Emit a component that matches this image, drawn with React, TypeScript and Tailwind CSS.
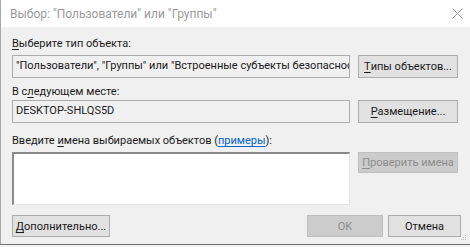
import React from "react";

const font = { fontFamily: 'Roboto, "Noto Sans", sans-serif' };

function U({ children }: { children: React.ReactNode }) {
  return <span className="underline underline-offset-[2px] decoration-[1px]">{children}</span>;
}

function Btn({
  children,
  w,
  h = 23,
  disabled,
}: {
  children: React.ReactNode;
  w: string;
  h?: number;
  disabled?: boolean;
}) {
  return (
    <div
      className={
        (disabled
          ? "bg-[#cccccc] border-[#bfbfbf] text-[#8c8c8c] "
          : "bg-[#e1e1e1] border-[#adadad] text-[#1a1a1a] ") +
        w +
        " shrink-0 border flex items-center justify-center text-[11px] leading-none whitespace-nowrap"
      }
      style={{ height: h }}
    >
      {children}
    </div>
  );
}

export default function App() {
  return (
    <div className="w-[470px] h-[247px] overflow-hidden bg-[#f0f0f0] flex flex-col" style={font}>
      <div className="flex-1 flex flex-col border-l border-[#a9a9a9] relative">
        <div className="h-[27px] bg-white flex items-center pl-[9px] text-[12px] text-[#9a9a9a] whitespace-nowrap">
          <span>Выбор: "Пользователи" или "Группы"</span>
          <svg className="ml-auto mr-[7px]" width="11" height="11" viewBox="0 0 11 11">
            <path d="M0.5 0.5 L10.5 10.5 M10.5 0.5 L0.5 10.5" stroke="#9a9a9a" strokeWidth="1" fill="none" />
          </svg>
        </div>
        <div className="flex flex-col pl-[11px] text-[11px] text-[#1a1a1a] whitespace-nowrap">
          <div className="h-[16px] mt-[9px] leading-[16px]">
            <U>В</U>ыберите тип объекта:
          </div>
          <div className="flex mt-[3px]">
            <div className="w-[338px] h-[23px] border border-[#adadad] bg-[#f0f0f0] flex items-center pl-[3px] overflow-hidden whitespace-nowrap">
              "Пользователи", "Группы" или "Встроенные субъекты безопасности"
            </div>
            <div className="ml-[8px]">
              <Btn w="w-[100px]">
                <U>Т</U>ипы объектов...
              </Btn>
            </div>
          </div>
          <div className="h-[16px] mt-[6px] leading-[16px]">
            В с<U>л</U>едующем месте:
          </div>
          <div className="flex">
            <div className="w-[338px] h-[23px] border border-[#adadad] bg-[#f0f0f0] flex items-center pl-[3px] overflow-hidden whitespace-nowrap">
              DESKTOP-SHLQS5D
            </div>
            <div className="ml-[8px]">
              <Btn w="w-[100px]">
                <U>Р</U>азмещение...
              </Btn>
            </div>
          </div>
          <div className="h-[16px] mt-[10px] leading-[16px]">
            Введите <U>и</U>мена выбираемых объектов (
            <span className="text-[#0066cc] underline underline-offset-[2px] decoration-[1px]">примеры</span>):
          </div>
          <div className="flex mt-[3px]">
            <div className="w-[338px] h-[53px] bg-white border-t-2 border-l-2 border-t-[#8a8a8a] border-l-[#8a8a8a] border-b border-r border-b-[#e3e3e3] border-r-[#e3e3e3]" />
            <div className="ml-[8px]">
              <Btn w="w-[100px]" h={21} disabled>
                <U>П</U>роверить имена
              </Btn>
            </div>
          </div>
          <div className="flex mt-[10px] items-start">
            <Btn w="w-[98px]" h={22}>
              <U>Д</U>ополнительно...
            </Btn>
            <div className="ml-auto mr-[9px] flex gap-[5px]">
              <Btn w="w-[76px]" h={22} disabled>
                OK
              </Btn>
              <Btn w="w-[73px]" h={22}>
                Отмена
              </Btn>
            </div>
          </div>
        </div>
        <svg className="absolute right-[3px] bottom-[3px]" width="6" height="6" viewBox="0 0 6 6">
          <rect x="4" y="0" width="1" height="1" fill="#b8b8b8" />
          <rect x="2" y="2" width="1" height="1" fill="#b8b8b8" />
          <rect x="4" y="2" width="1" height="1" fill="#b8b8b8" />
          <rect x="0" y="4" width="1" height="1" fill="#b8b8b8" />
          <rect x="2" y="4" width="1" height="1" fill="#b8b8b8" />
          <rect x="4" y="4" width="1" height="1" fill="#b8b8b8" />
        </svg>
      </div>
      <div className="h-[1px] bg-[#6e6e6e]" />
      <div className="h-[2px] bg-[#f4f4f4]" />
    </div>
  );
}
